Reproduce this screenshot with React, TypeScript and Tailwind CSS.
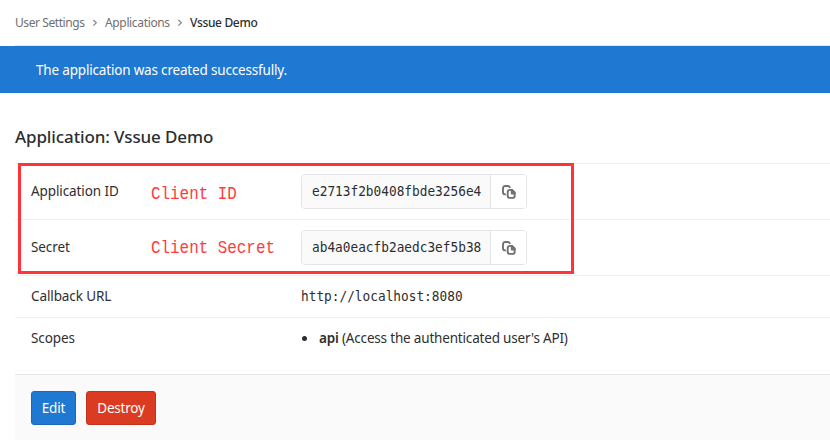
import type { ReactNode } from "react";

function Chevron() {
  return (
    <svg className="h-[8px] w-[6px]" viewBox="0 0 6 8" fill="none" stroke="#8a8a8a" strokeWidth="1.3">
      <path d="M1.4 1 4.3 3.8 1.4 6.6" />
    </svg>
  );
}

function CopyIcon() {
  return (
    <svg className="h-[14px] w-[14px]" viewBox="0 0 14 14" fill="none" stroke="#707070" strokeWidth="1.9">
      <path d="M3.9 9.4H3.2A2.2 2.2 0 0 1 1 7.2V3.2A2.2 2.2 0 0 1 3.2 1H5.8A2.4 2.4 0 0 1 8.1 2.8" />
      <path d="M7.9 4.9H10L12.7 7.6V10.7A2.2 2.2 0 0 1 10.5 12.9H7.9A2.2 2.2 0 0 1 5.7 10.7V7.1A2.2 2.2 0 0 1 7.9 4.9Z" />
      <path d="M8.8 4.5H10.8L13.3 7V9.4H10A1.2 1.2 0 0 1 8.8 8.2Z" fill="#707070" stroke="none" />
    </svg>
  );
}

function Row({ label, height, children }: { label: string; height: string; children: ReactNode }) {
  return (
    <div className={`flex items-center border-t border-[#f0f0f0] ${height}`}>
      <div className="w-[286px] shrink-0 pl-4 text-[13.5px] tracking-[-0.1px]">{label}</div>
      {children}
    </div>
  );
}

function CopyField({ value }: { value: string }) {
  return (
    <div className="flex h-[35px] w-[226px] overflow-hidden rounded-[4px] border border-[#e5e5e5]">
      <div className="flex w-[189px] items-center overflow-hidden border-r border-[#e5e5e5] bg-[#fafafa] pl-[10px] pr-[9px] font-['DejaVu_Sans_Mono',monospace] text-[12.79px]">
        <span className="block scale-y-[1.06] overflow-hidden whitespace-nowrap">{value}</span>
      </div>
      <button className="flex flex-1 items-center justify-center bg-white" aria-label="Copy">
        <CopyIcon />
      </button>
    </div>
  );
}

export default function App() {
  return (
    <div className="h-[440px] w-[830px] overflow-hidden bg-white font-['Noto_Sans','Open_Sans',sans-serif] text-[#2e2e2e]">
      <nav className="ml-[15px] flex h-[46px] items-center border-b border-[#e5e5e5] text-[12px] whitespace-nowrap text-[#707070]">
        <span className="w-[70px] tracking-[-0.42px]">User Settings</span>
        <span className="flex w-[20px] justify-center pr-px"><Chevron /></span>
        <span className="w-[65px] tracking-[-0.35px]">Applications</span>
        <span className="flex w-[20px] justify-center pr-px"><Chevron /></span>
        <span className="font-medium tracking-[-0.34px] text-[#2e2e2e]">Vssue Demo</span>
      </nav>
      <div className="flex h-[47px] items-center bg-[#1f78d1] pt-[2px] pl-9 text-[13.5px] text-white">
        <span className="tracking-[-0.18px]">The application was created successfully.</span>
      </div>
      <main className="ml-[15px]">
        <h1 className="flex h-[70px] items-center pt-[17px] text-[17px] font-medium tracking-[-0.12px]">Application: Vssue Demo</h1>
        <div className="relative">
          <Row label="Application ID" height="h-[56px]"><CopyField value="e2713f2b0408fbde3256e4" /></Row>
          <Row label="Secret" height="h-[56px]"><CopyField value="ab4a0eacfb2aedc3ef5b38" /></Row>
          <div className="pointer-events-none absolute top-0 left-[3px] h-[111px] w-[556px] border-[3px] border-[#ff3338] font-['Liberation_Mono',monospace] text-[15.9px] leading-[20px] text-[#ff3b3f]">
            <span className="absolute top-[18px] left-[130px] origin-center scale-y-[1.2] whitespace-nowrap">Client ID</span>
            <span className="absolute top-[72px] left-[130px] origin-center scale-y-[1.2] whitespace-nowrap">Client Secret</span>
          </div>
          <Row label="Callback URL" height="h-[42px]">
            <span className="scale-y-[1.06] font-['DejaVu_Sans_Mono',monospace] text-[12.79px]">http://localhost:8080</span>
          </Row>
          <Row label="Scopes" height="h-[42px]">
            <ul className="flex items-center text-[13.5px] tracking-[-0.18px]">
              <li className="flex items-center whitespace-nowrap">
                <span className="mr-[12px] ml-px h-[5px] w-[5px] rounded-full bg-[#2e2e2e]" />
                <b className="font-semibold">api</b>&nbsp;(Access the authenticated user's API)
              </li>
            </ul>
          </Row>
        </div>
        <footer className="mt-[15px] flex h-[66px] gap-[10px] border-t border-[#e5e5e5] bg-[#fafafa] pt-4 pl-4 text-[13.5px] text-white">
          <button className="h-[34px] w-[45px] rounded-[3px] border border-[#1b69b6] bg-[#1f78d1] tracking-[-0.2px]">Edit</button>
          <button className="h-[34px] w-[70px] rounded-[3px] border border-[#c0341d] bg-[#db3b21] tracking-[-0.2px]">Destroy</button>
        </footer>
      </main>
    </div>
  );
}
